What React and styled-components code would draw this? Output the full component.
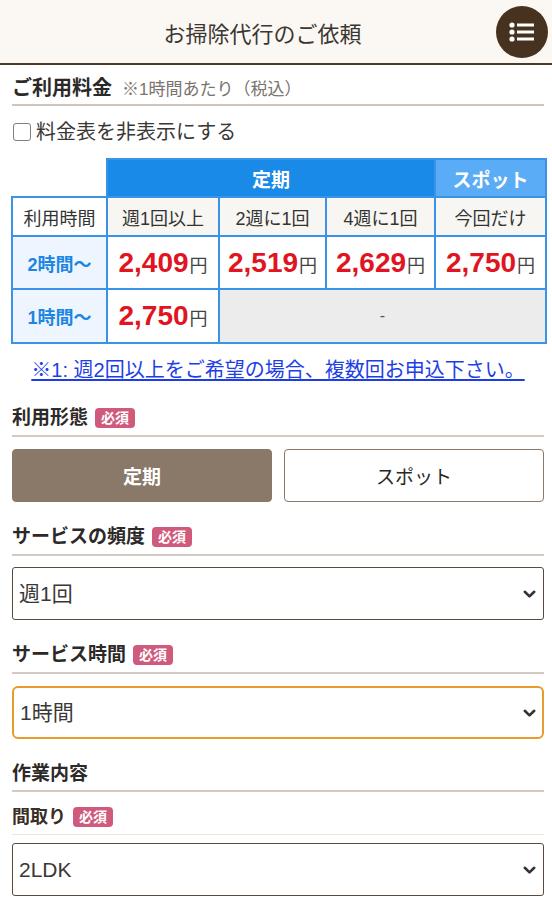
import React from "react";
import styled, { createGlobalStyle } from "styled-components";

const Global = createGlobalStyle`
  html, body { margin: 0; padding: 0; background: #fff; }
  body { font-family: "Liberation Sans", "Noto Sans CJK JP", sans-serif; color: #333; }
  * { box-sizing: border-box; }
`;

const Page = styled.div`
  width: 552px;
  background: #fff;
`;

const Header = styled.header`
  height: 65px;
  background: #fbf8f3;
  border-bottom: 2px solid #4a3a2c;
  display: flex;
  align-items: center;
  justify-content: center;
  padding-right: 27px;
  position: relative;
`;

const Title = styled.h1`
  margin: 0;
  font-size: 22px;
  font-weight: 400;
  color: #3a3632;
`;

const MenuButton = styled.button`
  position: absolute;
  right: 4px;
  top: 6px;
  width: 52px;
  height: 52px;
  border-radius: 50%;
  border: none;
  background: #47311f;
  display: flex;
  align-items: center;
  justify-content: center;
  padding: 0;
`;

const Content = styled.main`
  padding: 0 8px 0 12px;
`;

const SectionTitle = styled.div`
  display: flex;
  align-items: baseline;
  gap: 10px;
  padding-top: 10px;
  padding-bottom: 1px;
  border-bottom: 2px solid #cfc7bf;
  line-height: 26px;
`;

const SectionMain = styled.span`
  font-size: 20px;
  font-weight: 700;
  color: #2c2a28;
`;

const SectionSub = styled.span`
  font-size: 17px;
  color: #7a746e;
`;

const CheckRow = styled.label`
  display: flex;
  align-items: center;
  gap: 5px;
  margin-top: 14px;
  font-size: 20px;
  line-height: 24px;
  color: #3a3836;
`;

const CheckBox = styled.span`
  width: 18px;
  height: 18px;
  border: 1.5px solid #808080;
  border-radius: 3px;
  background: #fff;
  margin-left: 1px;
`;

const PriceTable = styled.table`
  margin-top: 14px;
  margin-left: -1px;
  width: 534px;
  border-collapse: collapse;
  table-layout: fixed;
  text-align: center;
`;

const Th = styled.th`
  border: 2px solid #3a93e6;
  font-weight: 400;
  font-size: 18px;
  color: #333;
  height: 39px;
  background: ${(p) => p.$bg || "#f8f6f2"};
  padding: 0;
`;

const BlankTh = styled.th`
  border: none;
  border-bottom: 2px solid #3a93e6;
  background: #fff;
`;

const GroupTh = styled.th`
  border: 2px solid #3a93e6;
  background: ${(p) => p.$bg};
  color: #fff;
  font-weight: 700;
  font-size: 19px;
  height: 38px;
  padding: 0;
`;

const RowHead = styled.th`
  border: 2px solid #3a93e6;
  background: #eef5fe;
  color: #1c86e2;
  font-weight: 700;
  font-size: 18px;
  height: ${(p) => p.$h}px;
  padding: 0;
`;

const Td = styled.td`
  border: 2px solid #3a93e6;
  background: ${(p) => (p.$empty ? "#ececec" : "#fff")};
  padding: 0;
  font-size: 16px;
  color: #555;
`;

const Price = styled.span`
  font-size: 28px;
  font-weight: 700;
  color: #e0151f;
`;

const Yen = styled.span`
  font-size: 18px;
  color: #444;
  margin-left: 1px;
`;

const Note = styled.a`
  display: block;
  text-align: center;
  margin-top: 13px;
  font-size: 20px;
  line-height: 26px;
  color: #1d3ee6;
  text-decoration: underline;
  text-underline-offset: 2px;
  white-space: nowrap;
`;

const FieldLabel = styled.div`
  display: flex;
  align-items: center;
  gap: 7px;
  margin-top: ${(p) => p.$mt || 22}px;
  padding-bottom: ${(p) => p.$pb || 4}px;
  border-bottom: ${(p) => (p.$light ? "1px solid #e9e5e0" : "2px solid #d3cbc3")};
  font-size: ${(p) => p.$fs || 19}px;
  font-weight: 700;
  line-height: 26px;
  color: ${(p) => p.$color || "#2c2a28"};
`;

const Badge = styled.span`
  background: #d05a7b;
  color: #fff;
  font-size: 14px;
  font-weight: 700;
  line-height: 20px;
  padding: 0 6px;
  border-radius: 4px;
`;

const ToggleGroup = styled.div`
  display: grid;
  grid-template-columns: 1fr 1fr;
  gap: 12px;
  margin-top: 12px;
`;

const ToggleButton = styled.button`
  height: 53px;
  border-radius: 4px;
  border: 1.5px solid #8a7868;
  background: ${(p) => (p.$active ? "#8a7868" : "#fff")};
  color: ${(p) => (p.$active ? "#fff" : "#2a2826")};
  font-family: inherit;
  font-size: 19px;
  font-weight: ${(p) => (p.$active ? 700 : 400)};
`;

const SelectWrap = styled.div`
  position: relative;
  margin-top: ${(p) => p.$mt || 12}px;
`;

const Select = styled.select`
  appearance: none;
  -webkit-appearance: none;
  width: 100%;
  height: 53px;
  padding: 0 40px 0 6px;
  font-family: inherit;
  font-size: 21px;
  color: #3a3836;
  background: #fff;
  border: ${(p) => (p.$focus ? "2px solid #e89a2c" : "1.5px solid #5a4a3d")};
  border-radius: ${(p) => (p.$focus ? 6 : 3)}px;
  outline: none;
`;

const Chevron = styled.svg`
  position: absolute;
  right: 8px;
  top: 50%;
  margin-top: -6px;
  pointer-events: none;
`;

function Arrow() {
  return (
    <Chevron width="13" height="12" viewBox="0 0 13 12">
      <path d="M1.8 3.8 L6.5 8.4 L11.2 3.8" fill="none" stroke="#333" strokeWidth="2.6" strokeLinecap="round" strokeLinejoin="round" />
    </Chevron>
  );
}

function Field({ label, required, mt, pb, light, fs, color }) {
  return (
    <FieldLabel $mt={mt} $pb={pb} $light={light} $fs={fs} $color={color}>
      {label}
      {required && <Badge>必須</Badge>}
    </FieldLabel>
  );
}

function Amount({ v }) {
  return (
    <>
      <Price>{v}</Price>
      <Yen>円</Yen>
    </>
  );
}

export default function App() {
  return (
    <Page>
      <Global />
      <Header>
        <Title>お掃除代行のご依頼</Title>
        <MenuButton aria-label="menu">
          <svg width="26" height="22" viewBox="0 0 26 22">
            <circle cx="3" cy="4" r="2.6" fill="#fff" />
            <circle cx="3" cy="11" r="2.6" fill="#fff" />
            <circle cx="3" cy="18" r="2.6" fill="#fff" />
            <rect x="8" y="2.5" width="17" height="3" fill="#fff" />
            <rect x="8" y="9.5" width="17" height="3" fill="#fff" />
            <rect x="8" y="16.5" width="17" height="3" fill="#fff" />
          </svg>
        </MenuButton>
      </Header>
      <Content>
        <SectionTitle>
          <SectionMain>ご利用料金</SectionMain>
          <SectionSub>※1時間あたり（税込）</SectionSub>
        </SectionTitle>
        <CheckRow>
          <CheckBox />
          料金表を非表示にする
        </CheckRow>
        <PriceTable>
          <colgroup>
            <col style={{ width: 95 }} />
            <col style={{ width: 112 }} />
            <col style={{ width: 107 }} />
            <col style={{ width: 109 }} />
            <col style={{ width: 111 }} />
          </colgroup>
          <thead>
            <tr>
              <BlankTh />
              <GroupTh colSpan={3} $bg="#1a8ae8">定期</GroupTh>
              <GroupTh $bg="#5aacf6">スポット</GroupTh>
            </tr>
            <tr>
              <Th $bg="#fff">利用時間</Th>
              <Th>週1回以上</Th>
              <Th>2週に1回</Th>
              <Th>4週に1回</Th>
              <Th>今回だけ</Th>
            </tr>
          </thead>
          <tbody>
            <tr>
              <RowHead $h={53}>2時間〜</RowHead>
              <Td><Amount v="2,409" /></Td>
              <Td><Amount v="2,519" /></Td>
              <Td><Amount v="2,629" /></Td>
              <Td><Amount v="2,750" /></Td>
            </tr>
            <tr>
              <RowHead $h={54}>1時間〜</RowHead>
              <Td><Amount v="2,750" /></Td>
              <Td colSpan={3} $empty>-</Td>
            </tr>
          </tbody>
        </PriceTable>
        <Note href="#">※1: 週2回以上をご希望の場合、複数回お申込下さい。</Note>

        <Field label="利用形態" required mt={22} />
        <ToggleGroup>
          <ToggleButton $active>定期</ToggleButton>
          <ToggleButton>スポット</ToggleButton>
        </ToggleGroup>

        <Field label="サービスの頻度" required />
        <SelectWrap $mt={11}>
          <Select defaultValue="週1回">
            <option>週1回</option>
            <option>2週に1回</option>
            <option>4週に1回</option>
          </Select>
          <Arrow />
        </SelectWrap>

        <Field label="サービス時間" required />
        <SelectWrap>
          <Select $focus defaultValue="1時間">
            <option>1時間</option>
            <option>2時間</option>
          </Select>
          <Arrow />
        </SelectWrap>

        <Field label="作業内容" pb={3} />
        <Field label="間取り" required mt={12} pb={4} light fs={18} color="#3a2e26" />
        <SelectWrap $mt={8}>
          <Select defaultValue="2LDK">
            <option>1R</option>
            <option>1LDK</option>
            <option>2LDK</option>
          </Select>
          <Arrow />
        </SelectWrap>
      </Content>
    </Page>
  );
}
